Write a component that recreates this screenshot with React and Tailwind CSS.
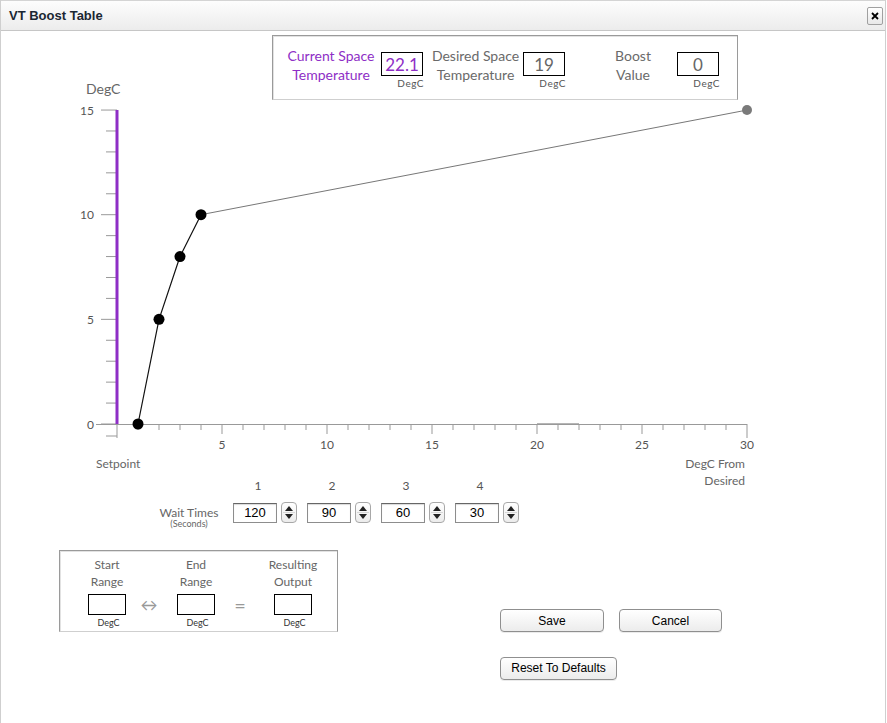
import React from "react";

const PURPLE = "#8e2ec6";
const px = (x) => 116 + 21 * x;
const py = (y) => 424 - 20.93 * y;

function Chart() {
  const yTicks = [];
  for (let i = 0; i <= 15; i++) {
    const major = i % 5 === 0;
    yTicks.push(
      <line key={"yt" + i} x1={major ? 100 : 105} x2={116} y1={py(i)} y2={py(i)} stroke="#999" strokeWidth="1" />
    );
  }
  const xTicks = [];
  for (let i = 0; i <= 30; i++) {
    const end = i === 0 || i === 30;
    const major = i % 5 === 0;
    xTicks.push(
      <line key={"xt" + i} x1={px(i)} x2={px(i)} y1={424} y2={end ? 438 : major ? 434 : 430} stroke="#999" strokeWidth="1" />
    );
  }
  const pts = [
    [1, 0],
    [2, 5],
    [3, 8],
    [4, 10],
  ];
  return (
    <svg
      width="887"
      height="398"
      viewBox="0 80 887 398"
      className="block -mt-[20px] overflow-visible"
      style={{ fontFamily: "Lato, 'Open Sans', sans-serif" }}
    >
      <text x="85" y="94" fontSize="14" fill="#666">DegC</text>
      {yTicks}
      <line x1={105} x2={116} y1={436} y2={436} stroke="#999" strokeWidth="1" />
      {[0, 5, 10, 15].map((v) => (
        <text key={"yl" + v} x="93" y={py(v) + 4.5} fontSize="12" fill="#555" textAnchor="end">
          {v}
        </text>
      ))}
      <line x1={95} x2={746} y1={424.5} y2={424.5} stroke="#999" strokeWidth="1" />
      <line x1={536} x2={578} y1={423.5} y2={423.5} stroke="#b5b5b5" strokeWidth="1.2" />
      {xTicks}
      {[5, 10, 15, 20, 25, 30].map((v) => (
        <text key={"xl" + v} x={px(v)} y={448.5} fontSize="12" fill="#555" textAnchor="middle">
          {v}
        </text>
      ))}
      <line x1={116} x2={116} y1={py(15)} y2={424} stroke={PURPLE} strokeWidth="3" />
      <text x="95" y="468" fontSize="12" fill="#666">Setpoint</text>
      <text x="744" y="468" fontSize="12" fill="#666" textAnchor="end">DegC From</text>
      <text x="744" y="485" fontSize="12" fill="#666" textAnchor="end">Desired</text>
      <line x1={px(4)} y1={py(10)} x2={px(30)} y2={py(15)} stroke="#777" strokeWidth="1" />
      <polyline
        points={pts.map(([x, y]) => `${px(x)},${py(y)}`).join(" ")}
        fill="none"
        stroke="#111"
        strokeWidth="1.2"
      />
      {pts.map(([x, y]) => (
        <circle key={"p" + x} cx={px(x)} cy={py(y)} r="5.5" fill="#000" />
      ))}
      <circle cx={px(30)} cy={py(15)} r="5" fill="#7a7a7a" />
    </svg>
  );
}

function ValueBox({ value, purple }) {
  return (
    <div className="flex flex-col items-end mt-[6px]">
      <div
        className={
          "w-[42px] h-[24px] border border-black flex items-center justify-center text-[17px] font-normal leading-none " +
          (purple ? "text-[#8e2ec6]" : "text-[#666]")
        }
      >
        {value}
      </div>
      <div className="text-[10px] leading-[10px] mt-[2px] text-[#555] tracking-[0.5px] mr-[-1px]">DegC</div>
    </div>
  );
}

function Spinner() {
  return (
    <div className="w-[16px] h-[21px] rounded-[4px] border border-[#a8a8a8] bg-gradient-to-b from-white to-[#ececec] flex flex-col items-center justify-between py-[3px]">
      <svg width="8" height="5" viewBox="0 0 8 5">
        <path d="M4 0 L8 5 L0 5 Z" fill="#222" />
      </svg>
      <div className="w-[12px] h-px bg-[#d8d8d8]" />
      <svg width="8" height="5" viewBox="0 0 8 5">
        <path d="M0 0 L8 0 L4 5 Z" fill="#222" />
      </svg>
    </div>
  );
}

function WaitInput({ value }) {
  return (
    <div className="flex items-center gap-[4px] w-[64px]">
      <div
        className="w-[44px] h-[20px] border border-[#8d8d8d] border-t-[#666] bg-white flex items-center justify-center text-[13px] text-black shadow-[inset_0_1px_1px_rgba(0,0,0,0.15)]"
        style={{ fontFamily: "'Liberation Sans', Arial, sans-serif" }}
      >
        {value}
      </div>
      <Spinner />
    </div>
  );
}

function RangeCol({ l1, l2 }) {
  return (
    <div className="w-[70px] flex flex-col items-center">
      <div className="text-[12px] leading-[17px] text-[#666]">{l1}</div>
      <div className="text-[12px] leading-[17px] text-[#666]">{l2}</div>
      <div className="w-[38px] h-[21px] border border-black mt-[4px]" />
      <div className="text-[9px] leading-[10px] mt-[3px] ml-[3px] text-[#333]">DegC</div>
    </div>
  );
}

function MacButton({ children, w }) {
  return (
    <button
      className={
        "h-[23px] rounded-[4px] border border-[#8f8f8f] bg-gradient-to-b from-white to-[#ececec] text-[12px] text-black leading-none shadow-[0_1px_0_rgba(0,0,0,0.08)] " +
        w
      }
      style={{ fontFamily: "'Liberation Sans', Arial, sans-serif" }}
    >
      {children}
    </button>
  );
}

export default function App() {
  return (
    <div
      className="w-[886px] h-[723px] bg-white border-x border-[#cfcfcf] overflow-hidden"
      style={{ fontFamily: "Lato, 'Open Sans', sans-serif" }}
    >
      {/* Title bar */}
      <div className="h-[31px] border-t border-b border-t-[#d4d4d4] border-b-[#c6c6c6] bg-gradient-to-b from-[#fdfdfd] to-[#ececec] flex items-center justify-between pl-[8px] pr-[2px]">
        <div
          className="text-[13px] font-bold text-[#1b2733]"
          style={{ fontFamily: "'Liberation Sans', Arial, sans-serif" }}
        >
          VT Boost Table
        </div>
        <div className="w-[16px] h-[18px] rounded-[2px] border border-[#a0a0a0] bg-gradient-to-b from-white to-[#e8e8e8] flex items-center justify-center">
          <svg width="8" height="8" viewBox="0 0 8 8">
            <path d="M1 1 L7 7 M7 1 L1 7" stroke="#000" strokeWidth="1.8" />
          </svg>
        </div>
      </div>

      {/* Top info panel */}
      <div className="pt-[4px]">
        <div className="ml-[271px] w-[466px] h-[65px] border border-[#9a9a9a] border-b-[#cfcfcf] shadow-[inset_1px_1px_0_#e2e2e2] flex items-start pt-[10px]">
          <div className="ml-[8px] w-[100px] text-center text-[14px] leading-[19px] text-[#8e2ec6]">
            <div>Current Space</div>
            <div>Temperature</div>
          </div>
          <ValueBox value="22.1" purple />
          <div className="ml-[5px] w-[95px] text-center text-[14px] leading-[19px] text-[#6a6a6a]">
            <div>Desired Space</div>
            <div>Temperature</div>
          </div>
          <ValueBox value="19" />
          <div className="ml-[24px] w-[88px] text-center text-[14px] leading-[19px] text-[#6a6a6a]">
            <div>Boost</div>
            <div>Value</div>
          </div>
          <ValueBox value="0" />
        </div>

        <Chart />

        {/* Wait times */}
        <div className="h-[16px] pl-[232px] flex gap-[10px] text-[12px] leading-[16px] text-[#555]">
          {["1", "2", "3", "4"].map((n) => (
            <div key={n} className="w-[64px]">
              <div className="w-[50px] text-center">{n}</div>
            </div>
          ))}
        </div>
        <div className="mt-[8px] h-[21px] flex items-start overflow-visible">
          <div className="ml-[150px] w-[76px] mt-[4px] text-center text-[#666]">
            <div className="text-[12px] leading-[13px]">Wait Times</div>
            <div className="text-[9px] leading-[10px]">(Seconds)</div>
          </div>
          <div className="ml-[6px] flex gap-[10px]">
            <WaitInput value="120" />
            <WaitInput value="90" />
            <WaitInput value="60" />
            <WaitInput value="30" />
          </div>
        </div>

        {/* Bottom row */}
        <div className="mt-[27px] flex items-start">
          <div className="ml-[58px] w-[279px] h-[82px] border border-[#9a9a9a] border-b-[#cfcfcf] shadow-[inset_1px_1px_0_#e2e2e2] flex items-start pt-[5px]">
            <div className="ml-[12px]">
              <RangeCol l1="Start" l2="Range" />
            </div>
            <div className="w-[14px] mt-[38px] h-[21px] flex items-center justify-center text-[#999] text-[17px]">↔</div>
            <div className="ml-[5px]">
              <RangeCol l1="End" l2="Range" />
            </div>
            <div className="w-[18px] mt-[38px] h-[21px] flex items-center justify-center text-[#999] text-[20px]">=</div>
            <div className="ml-[9px]">
              <RangeCol l1="Resulting" l2="Output" />
            </div>
          </div>
          <div className="ml-[162px] mt-[59px] flex flex-col">
            <div className="flex gap-[15px]">
              <MacButton w="w-[104px]">Save</MacButton>
              <MacButton w="w-[103px]">Cancel</MacButton>
            </div>
            <div className="mt-[22px]">
              <MacButton w="w-[117px]">Reset To Defaults</MacButton>
            </div>
          </div>
        </div>
      </div>
    </div>
  );
}
